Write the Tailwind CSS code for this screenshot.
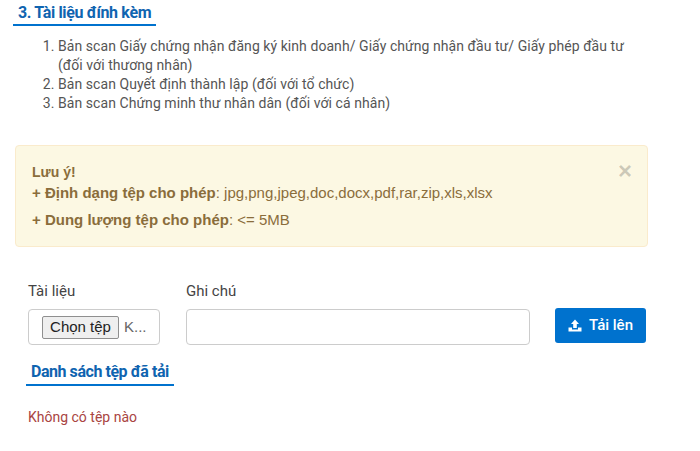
<!DOCTYPE html>
<html lang="vi"><head><meta charset="utf-8">
<script src="https://cdn.jsdelivr.net/npm/@tailwindcss/browser@4"></script>
</head>
<body class="bg-white font-['Roboto',sans-serif] text-[#555] text-[14px]">
<div class="w-[700px] h-[451px] overflow-hidden relative">
  <div class="pl-[13px] pt-[2px]">
    <h3 class="inline-block w-[143px] border-b-2 border-[#0072ce] px-[5px] h-[24px] leading-[22px] text-[16px] tracking-[-0.35px] whitespace-nowrap font-bold text-[#0f64b0]">3. Tài liệu đính kèm</h3>
  </div>
  <ol class="list-decimal mt-[11px] ml-[58px] w-[572px] leading-[19px] text-[14px] tracking-[0.06px] text-[#555]">
    <li>Bản scan Giấy chứng nhận đăng ký kinh doanh/ Giấy chứng nhận đầu tư/ Giấy phép đầu tư (đối với thương nhân)</li>
    <li>Bản scan Quyết định thành lập (đối với tổ chức)</li>
    <li>Bản scan Chứng minh thư nhân dân (đối với cá nhân)</li>
  </ol>
  <div class="relative mt-[32px] ml-[15px] w-[633px] h-[102px] rounded-[4px] border border-[#faebcc] bg-[#fcf8e3] text-[#8a6d3b] px-[16px] pt-[16px] font-['Liberation_Sans',sans-serif] text-[15px] leading-[20px]">
    <div class="font-bold text-[14px]">Lưu ý!</div>
    <div class="mt-[1px]"><b>+ Định dạng tệp cho phép</b>: jpg,png,jpeg,doc,docx,pdf,rar,zip,xls,xlsx</div>
    <div class="mt-[7px]"><b>+ Dung lượng tệp cho phép</b>: &lt;= 5MB</div>
    <span class="absolute right-[15px] top-[14px] text-[24px] leading-[21px] font-bold text-black/20">×</span>
  </div>
  <div class="flex items-start mt-[34px] ml-[28px]">
    <div class="w-[132px] mr-[26px]">
      <div class="h-[20px] leading-[20px] mb-[8px] text-[15px] text-[#444]">Tài liệu</div>
      <div class="h-[36px] border border-[#ccc] rounded-[4px] flex items-center pl-[13px] text-[15px] font-['Liberation_Sans',sans-serif]">
        <span class="h-[23px] w-[77px] shrink-0 flex items-center justify-center border border-[#8f8f8f] rounded-[2px] bg-[#efefef] text-[#222]">Chọn tệp</span>
        <span class="ml-[5px] text-[#666]">K...</span>
      </div>
    </div>
    <div class="w-[344px] mr-[25px]">
      <div class="h-[20px] leading-[20px] mb-[8px] text-[15px] text-[#444]">Ghi chú</div>
      <div class="h-[36px] border border-[#ccc] rounded-[4px] bg-white"></div>
    </div>
    <button class="mt-[27px] w-[91px] h-[35px] rounded-[3px] bg-[#0072ce] text-white font-medium text-[15px] flex items-center justify-center gap-[7px]">
      <svg width="14" height="13" viewBox="0 0 14 13" fill="white"><path d="M7 0.5 L11 5 H8.8 V9 H5.2 V5 H3 Z"/><path d="M0.5 8.5 H4 V10.5 H10 V8.5 H13.5 V12.5 H0.5 Z"/></svg>
      <span>Tải lên</span>
    </button>
  </div>
  <div class="ml-[26px] mt-[15px]">
    <h4 class="inline-block w-[148px] border-b-2 border-[#0072ce] px-[5px] h-[26px] leading-[24px] text-[16px] tracking-[-0.45px] whitespace-nowrap font-bold text-[#0f64b0]">Danh sách tệp đã tải</h4>
  </div>
  <p class="ml-[28px] mt-[21px] text-[14px] leading-[20px] text-[#a94442]">Không có tệp nào</p>
</div>
</body></html>
